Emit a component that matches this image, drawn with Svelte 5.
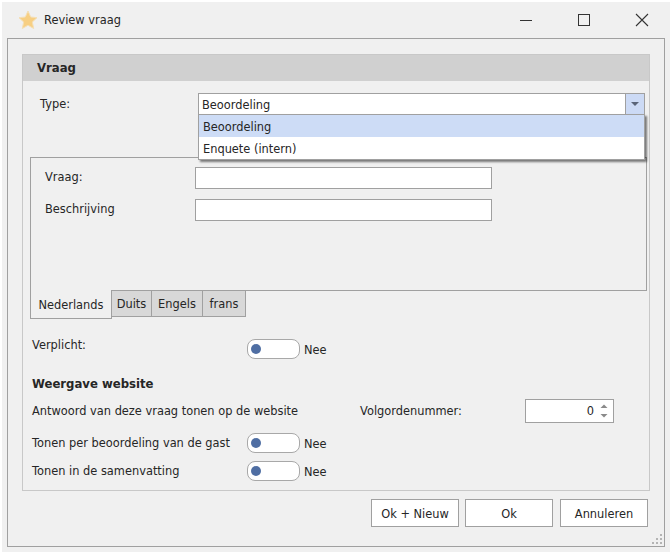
<script>
  const tabs = ['Duits', 'Engels', 'frans'];
</script>

<div class="window">
  <header class="titlebar">
    <svg class="star" width="20" height="20" viewBox="0 0 20 20"><path d="M10 1 12.700 7 19 7.700 14.300 12 15.700 18.500 10 15.200 4.300 18.500 5.700 12 1 7.700 7.300 7Z" fill="#f7cf83" stroke="#f5dfb5" stroke-width="1"/></svg>
    <span class="title">Review vraag</span>
    <div class="controls">
      <svg width="14" height="14" viewBox="0 0 14 14"><path d="M1 7.500H13" stroke="#333" stroke-width="1"/></svg>
      <svg width="14" height="14" viewBox="0 0 14 14"><rect x="1.500" y="1.500" width="11" height="11" fill="none" stroke="#333" stroke-width="1"/></svg>
      <svg width="14" height="14" viewBox="0 0 14 14"><path d="M1 1 13 13M13 1 1 13" stroke="#333" stroke-width="1.100"/></svg>
    </div>
  </header>

  <main class="frame">
    <section class="panel">
      <h2 class="panel-head">Vraag</h2>
      <div class="panel-body">
        <div class="type-row">
          <span class="type-label">Type:</span>
          <div class="select">
            <div class="select-value">Beoordeling</div>
            <div class="select-arrow"><svg width="8" height="4" viewBox="0 0 8 4"><path d="M0 0H8L4 4Z" fill="#5a6478"/></svg></div>
            <ul class="menu">
              <li class="active">Beoordeling</li>
              <li>Enquete (intern)</li>
            </ul>
          </div>
        </div>

        <div class="tabbox">
          <div class="tab-page">
            <label class="field"><span>Vraag:</span><input type="text" /></label>
            <label class="field"><span>Beschrijving</span><input type="text" /></label>
          </div>
          <div class="tabs">
            <div class="tab current">Nederlands</div>
            {#each tabs as t}<div class="tab">{t}</div>{/each}
          </div>
        </div>

        <div class="row verplicht">
          <span class="row-label">Verplicht:</span>
          <div class="toggle-wrap"><span class="toggle"><i></i></span><span class="nee">Nee</span></div>
        </div>

        <h3>Weergave website</h3>

        <div class="answer-row">
          <span class="answer">Antwoord van deze vraag tonen op de website</span>
          <span class="volg">Volgordenummer:</span>
          <div class="spin">
            <span class="spin-val">0</span>
            <svg width="10" height="18" viewBox="0 0 10 18"><path d="M1.500 6 5 2.500 8.500 6Z" fill="#8a8a8a"/><path d="M1.500 12H8.500L5 15.500Z" fill="#8a8a8a"/></svg>
          </div>
        </div>

        <div class="row tonen1">
          <span class="row-label">Tonen per beoordeling van de gast</span>
          <div class="toggle-wrap"><span class="toggle"><i></i></span><span class="nee">Nee</span></div>
        </div>
        <div class="row tonen2">
          <span class="row-label">Tonen in de samenvatting</span>
          <div class="toggle-wrap"><span class="toggle"><i></i></span><span class="nee">Nee</span></div>
        </div>
      </div>
    </section>

    <footer class="actions">
      <button>Ok + Nieuw</button>
      <button>Ok</button>
      <button class="last">Annuleren</button>
    </footer>

    <svg class="grip" width="12" height="12" viewBox="0 0 12 12"><path d="M9 1h2v2H9zM5 5h2v2H5zM9 5h2v2H9zM1 9h2v2H1zM5 9h2v2H5zM9 9h2v2H9z" fill="#b4b4b4"/></svg>
  </main>
</div>

<style>
  :global(body) { margin: 0; background: #fff; }
  .window {
    box-sizing: border-box;
    width: 668px;
    height: 550px;
    margin: 2px;
    background: #f0f0f0;
    display: flex;
    flex-direction: column;
    font: 11.400px/16px "DejaVu Sans", sans-serif;
    color: #262626;
  }
  .titlebar {
    height: 36px;
    flex: none;
    display: flex;
    align-items: center;
    padding: 0 21px 0 16px;
  }
  .star { margin-right: 6px; }
  .title { font-size: 11.400px; }
  .controls { margin-left: auto; display: flex; gap: 44px; }
  .frame {
    position: relative;
    box-sizing: border-box;
    margin: 0 5px 5px;
    height: 509px;
    border: 1px solid #a0a0a0;
    padding: 15px 14px 0;
  }
  .panel {
    box-sizing: border-box;
    height: 437px;
    border: 1px solid #c8c8c8;
  }
  .panel-head {
    margin: 0;
    height: 26px;
    background: #d0d0d0;
    padding-left: 14px;
    font-size: 11.700px;
    line-height: 26px;
    font-weight: 700;
  }
  .panel-body { padding: 12px 4px 0 7px; }
  .type-row { display: flex; height: 22px; }
  .type-label { width: 168px; padding-left: 10px; box-sizing: border-box; line-height: 22px; }
  .select {
    position: relative;
    flex: 1;
    display: flex;
    box-sizing: border-box;
    border: 1px solid #a0a0a0;
    background: #fff;
    height: 22px;
  }
  .select-value { flex: 1; padding-left: 3px; line-height: 22px; }
  .select-arrow {
    width: 18px;
    border-left: 1px solid #a0a0a0;
    background: #ccdaf5;
    display: flex;
    align-items: center;
    justify-content: center;
  }
  .menu {
    position: absolute;
    left: -1px;
    right: -1px;
    top: 20px;
    margin: 0;
    padding: 0;
    list-style: none;
    background: #fff;
    border: 1px solid #a0a0a0;
    box-shadow: 2px 2px 2px rgba(0, 0, 0, .5);
    z-index: 2;
  }
  .menu li { height: 22px; padding-left: 4px; line-height: 24px; }
  .menu li.active { background: #cddcf6; }

  .tabbox { margin: 42px -2px 0 0; }
  .tab-page {
    box-sizing: border-box;
    height: 134px;
    border: 1px solid #a0a0a0;
    padding: 9px 0 0 14px;
  }
  .field { display: flex; height: 22px; margin-bottom: 10px; }
  .field span { width: 150px; line-height: 20px; }
  .field input {
    box-sizing: border-box;
    width: 297px;
    height: 22px;
    border: 1px solid #a0a0a0;
    background: #fff;
    padding: 0;
  }
  .tabs { display: flex; align-items: flex-start; margin-top: -1px; }
  .tab {
    box-sizing: border-box;
    height: 27px;
    background: #d8d8d8;
    border: 1px solid #a0a0a0;
    border-left: 0;
    padding: 4px 0 0;
    text-align: center;
    line-height: 18px;
    width: 51px;
  }
  .tab:nth-child(2) { border-left: 1px solid #a0a0a0; margin-left: -1px; width: 41px; }
  .tab:nth-child(4) { width: 43px; }
  .tab.current {
    height: 29px;
    background: #f0f0f0;
    border-left: 1px solid #a0a0a0;
    border-top: 0;
    padding: 6px 0 0;
    width: 82px;
    white-space: nowrap;
  }

  .row { display: flex; }
  .row-label { width: 217px; padding-left: 2px; box-sizing: border-box; line-height: 20px; }
  .verplicht { margin-top: 20px; height: 22px; }
  .verplicht .row-label { margin-top: -4px; }
  .toggle-wrap { display: flex; align-items: center; height: 20px; }
  .toggle {
    box-sizing: border-box;
    display: flex;
    align-items: center;
    width: 53px;
    height: 20px;
    border: 1px solid #a8a8a8;
    border-radius: 8px;
    background: #fff;
    padding-left: 3px;
  }
  .toggle i { width: 10px; height: 10px; border-radius: 50%; background: #4f6ea3; }
  .nee { margin-left: 4px; padding-top: 2px; }

  h3 { margin: 14px 0 0 2px; font-size: 11.700px; line-height: 18px; font-weight: 700; }
  .answer-row { display: flex; align-items: center; height: 24px; margin-top: 6px; padding-left: 2px; }
  .answer { width: 328px; }
  .volg { width: 165px; }
  .spin {
    box-sizing: border-box;
    display: flex;
    align-items: center;
    justify-content: flex-end;
    width: 89px;
    height: 24px;
    border: 1px solid #a0a0a0;
    background: #fff;
    padding-right: 4px;
    gap: 5px;
  }
  .tonen1 { margin-top: 10px; height: 20px; }
  .tonen2 { margin-top: 8px; height: 20px; }

  .actions {
    display: flex;
    justify-content: flex-end;
    gap: 6px;
    margin-top: 8px;
    padding-right: 2px;
  }
  .last { margin-left: 1px; }
  button {
    box-sizing: border-box;
    width: 88px;
    height: 28px;
    border: 1px solid #a0a0a0;
    background: #fff;
    color: #262626;
    font: inherit;
    padding: 1px 0 0;
  }
  .grip { position: absolute; right: 1px; bottom: 1px; }
</style>
